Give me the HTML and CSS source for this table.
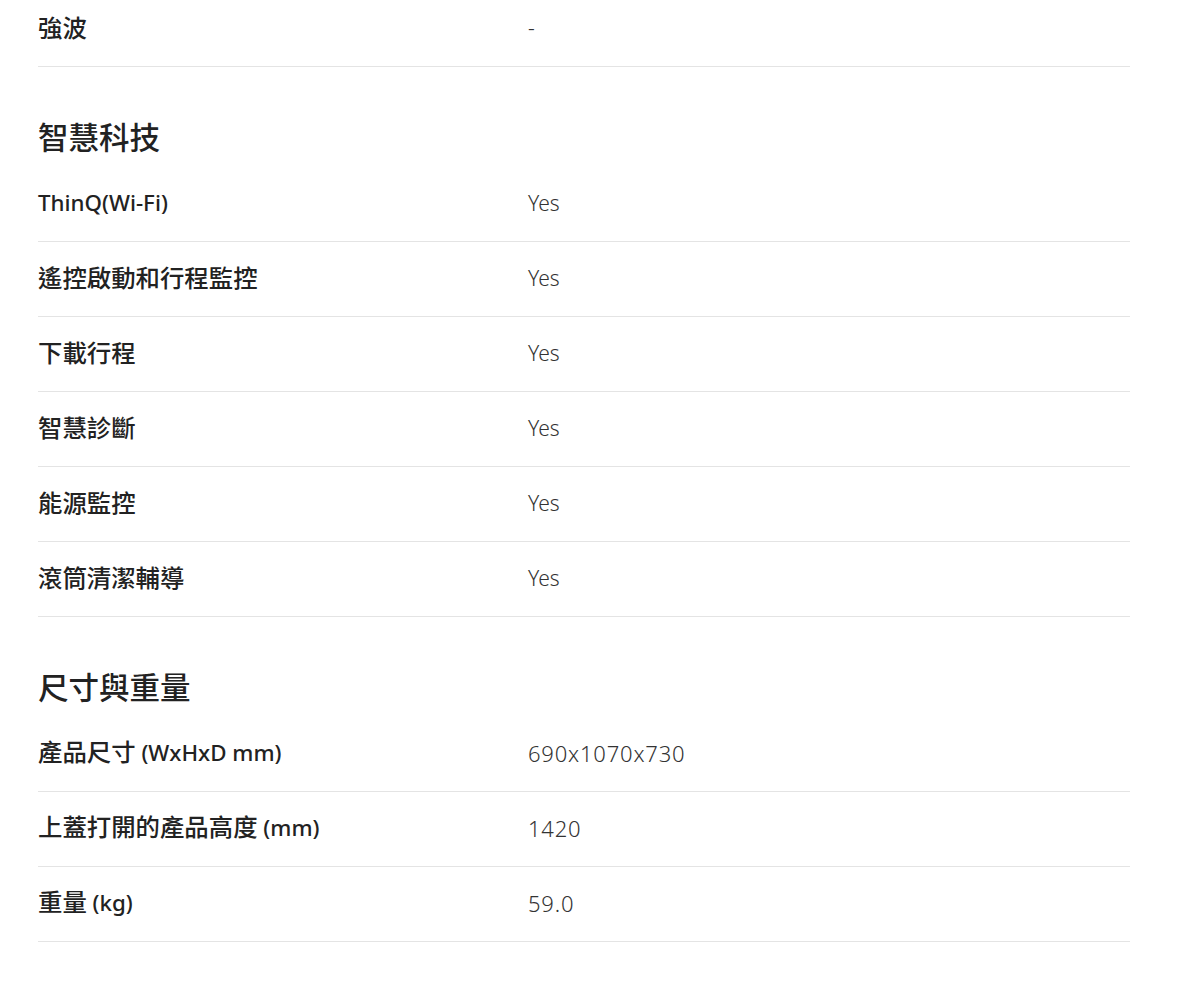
FILE: index.html
```html
<!DOCTYPE html>
<html lang="zh-Hant">
<head>
<meta charset="utf-8">
<link rel="stylesheet" href="styles.css">
</head>
<body>
<div class="specs">
  <div class="row first"><div class="label">強波</div><div class="value">-</div></div>

  <h2 class="heading">智慧科技</h2>
  <div class="row"><div class="label"><span class="en">ThinQ(Wi-Fi)</span></div><div class="value">Yes</div></div>
  <div class="row"><div class="label">遙控啟動和行程監控</div><div class="value">Yes</div></div>
  <div class="row"><div class="label">下載行程</div><div class="value">Yes</div></div>
  <div class="row"><div class="label">智慧診斷</div><div class="value">Yes</div></div>
  <div class="row"><div class="label">能源監控</div><div class="value">Yes</div></div>
  <div class="row"><div class="label">滾筒清潔輔導</div><div class="value">Yes</div></div>

  <h2 class="heading">尺寸與重量</h2>
  <div class="row"><div class="label">產品尺寸<span class="en"> (WxHxD mm)</span></div><div class="value num">690x1070x730</div></div>
  <div class="row"><div class="label">上蓋打開的產品高度<span class="en"> (mm)</span></div><div class="value num">1420</div></div>
  <div class="row"><div class="label">重量<span class="en"> (kg)</span></div><div class="value num">59.0</div></div>
</div>
</body>
</html>
```
FILE: styles.css
```css
html, body {
  margin: 0;
  padding: 0;
  background: #fff;
}
body {
  font-family: "Noto Sans", "Noto Sans CJK TC", sans-serif;
  color: #222;
}
.specs {
  width: 1092px;
  margin: -8px 0 0 38px;
}
.row {
  display: flex;
  align-items: center;
  height: 72px;
  padding-bottom: 2px;
  border-bottom: 1px solid #e4e4e4;
}
.label {
  width: 490px;
  flex: none;
  padding-bottom: 2px;
  font-family: "Noto Sans CJK TC", sans-serif;
  font-size: 24.4px;
  line-height: 34px;
  font-weight: 500;
  color: #222;
}
.en {
  font-family: "Noto Sans", sans-serif;
  font-size: 22.3px;
  font-weight: 500;
}
.value {
  font-size: 21px;
  font-weight: 300;
  color: #333;
}
.num {
  font-size: 22px;
  letter-spacing: 0.8px;
}
.heading {
  margin: 49px 0 11px;
  font-family: "Noto Sans CJK TC", sans-serif;
  font-size: 30.5px;
  line-height: 40px;
  font-weight: 500;
  color: #222;
}
```
